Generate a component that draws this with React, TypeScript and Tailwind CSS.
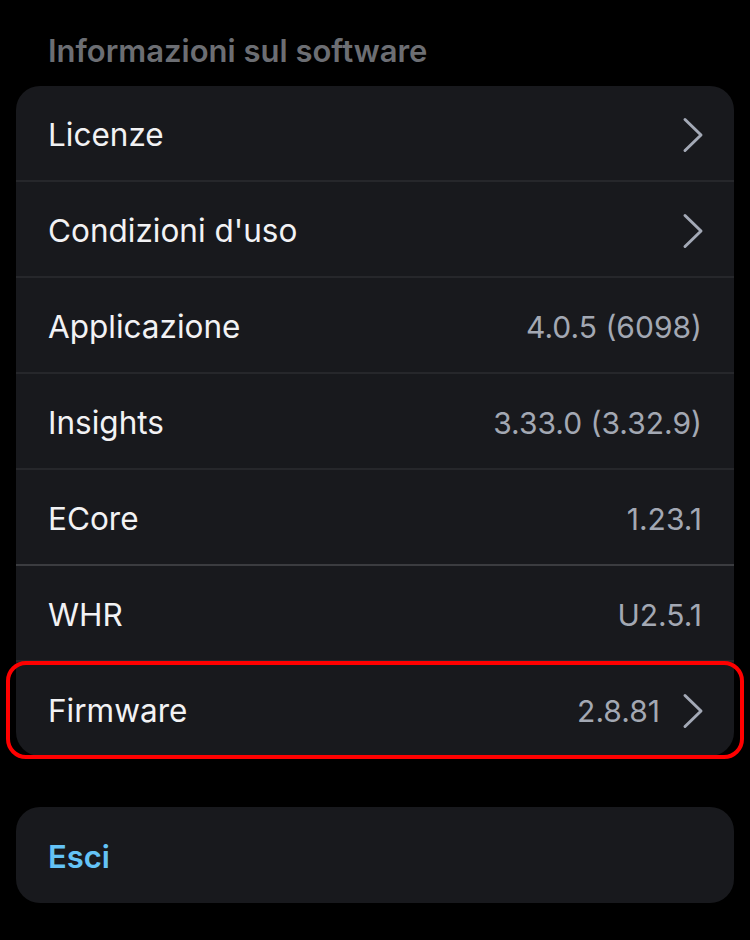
type Row = {
  label: string;
  value?: string;
  chevron?: boolean;
  divider?: "dark" | "light";
};

const rows: Row[] = [
  { label: "Licenze", chevron: true, divider: "dark" },
  { label: "Condizioni d'uso", chevron: true, divider: "dark" },
  { label: "Applicazione", value: "4.0.5 (6098)", divider: "dark" },
  { label: "Insights", value: "3.33.0 (3.32.9)", divider: "dark" },
  { label: "ECore", value: "1.23.1", divider: "light" },
  { label: "WHR", value: "U2.5.1", divider: "dark" },
];

function Chevron() {
  return (
    <svg width="22" height="36" viewBox="0 0 22 36" fill="none" className="mr-[-2px] shrink-0">
      <polyline
        points="3,2.5 19,18 3,33.5"
        stroke="#a3a9b6"
        strokeWidth="3"
        strokeLinecap="round"
        strokeLinejoin="round"
      />
    </svg>
  );
}

function RowItem({ row }: { row: Row }) {
  const border =
    row.divider === "light" ? "border-b-2 border-[#3b3c40]" : "border-b-2 border-[#26272b]";
  return (
    <div className={`flex h-[96px] items-center justify-between pl-8 pr-8 pt-1 ${border}`}>
      <span className="text-[31.5px] text-[#f2f2f4]">{row.label}</span>
      {row.value && <span className="text-[30px] text-[#a3a8b3]">{row.value}</span>}
      {row.chevron && <Chevron />}
    </div>
  );
}

export default function App() {
  return (
    <div
      className="min-h-[940px] w-[750px] bg-black px-4 pt-[30px]"
      style={{ fontFamily: "Inter, 'Open Sans', sans-serif" }}
    >
      <h2 className="pl-8 text-[31px] font-semibold leading-[42px] text-[#6c6e73]">
        Informazioni sul software
      </h2>

      <div className="mt-[14px] rounded-[24px] bg-[#18191d]">
        {rows.map((r) => (
          <RowItem key={r.label} row={r} />
        ))}
        <div className="relative flex h-[94px] items-center justify-between pl-8 pr-8 pt-1">
          <span className="text-[31.5px] text-[#f2f2f4]">Firmware</span>
          <div className="flex items-center gap-[22px]">
            <span className="text-[30px] text-[#a3a8b3]">2.8.81</span>
            <Chevron />
          </div>
          <div className="pointer-events-none absolute -left-[10px] -right-[10px] -top-[1px] -bottom-[3px] rounded-[20px] border-4 border-[#ff0000]" />
        </div>
      </div>

      <div className="mt-[51px] flex h-[96px] items-center rounded-[24px] bg-[#18191d] pl-8 pt-1">
        <span className="text-[31px] font-semibold text-[#64c3f6]">Esci</span>
      </div>
    </div>
  );
}
